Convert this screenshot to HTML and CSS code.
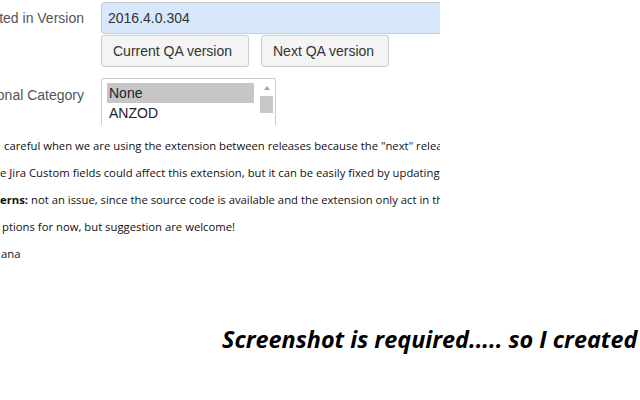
FILE: index.html
```html
<!DOCTYPE html>
<html>
<head>
<meta charset="utf-8">
<link rel="stylesheet" href="styles.css">
</head>
<body>
<div class="page">
  <div class="form">
    <div class="field">
      <div class="label"><span>Affected in Version</span></div>
      <div class="control">
        <div class="input">2016.4.0.304</div>
        <div class="buttons">
          <div class="btn">Current QA version</div>
          <div class="btn">Next QA version</div>
        </div>
      </div>
    </div>
    <div class="field field-cat">
      <div class="label label-cat"><span>Additional Category</span></div>
      <div class="control">
        <div class="listbox">
          <div class="options">
            <div class="opt selected">None</div>
            <div class="opt">ANZOD</div>
          </div>
          <div class="scrollbar">
            <div class="arrow"></div>
            <div class="thumb"></div>
          </div>
        </div>
      </div>
    </div>
  </div>
  <div class="notes">
    <p class="note n1">careful when we are using the extension between releases because the "next" release will not be the same</p>
    <p class="note">e Jira Custom fields could affect this extension, but it can be easily fixed by updating the code</p>
    <p class="note"><b>erns:</b> not an issue, since the source code is available and the extension only act in the page</p>
    <p class="note n4">ptions for now, but suggestion are welcome!</p>
    <p class="note n5">ana</p>
  </div>
</div>
<div class="caption">Screenshot is required..... so I created</div>
</body>
</html>
```
FILE: styles.css
```css
html, body {
  margin: 0;
  padding: 0;
  background: #fff;
}
.page {
  width: 440px;
  overflow: hidden;
}
.form {
  padding-top: 2px;
  font-family: "Liberation Sans", Arial, sans-serif;
  font-size: 14px;
  color: #333;
}
.field {
  display: flex;
  gap: 17px;
}
.label {
  width: 84px;
  flex: none;
  display: flex;
  justify-content: flex-end;
  white-space: nowrap;
  color: #555;
  height: 32px;
  align-items: center;
}
.label-cat {
  height: auto;
  align-items: flex-start;
  padding-top: 9px;
}
.control {
  flex: 1;
  min-width: 0;
}
.input {
  box-sizing: border-box;
  height: 32px;
  width: 360px;
  background: #d8e8fc;
  border: 1px solid #ccc;
  border-radius: 3px;
  padding: 0 6px;
  line-height: 30px;
  color: #333;
}
.buttons {
  display: flex;
  gap: 12px;
  margin-top: 1px;
}
.btn {
  box-sizing: border-box;
  height: 32px;
  line-height: 30px;
  padding: 0 11px;
  background: #f4f4f4;
  border: 1px solid #ccc;
  border-radius: 3px;
  color: #333;
}
.btn:first-child { width: 148px; }
.btn:last-child { width: 128px; }
.field-cat {
  margin-top: 11px;
}
.listbox {
  box-sizing: border-box;
  width: 175px;
  height: 47px;
  border: 1px solid #ccc;
  border-bottom: none;
  border-radius: 3px 3px 0 0;
  display: flex;
  padding: 4px 1px 0 5px;
  gap: 6px;
  overflow: hidden;
}
.options {
  width: 147px;
}
.opt {
  height: 20px;
  line-height: 20px;
  padding-left: 2px;
  color: #222;
}
.selected {
  background: #c6c6c6;
}
.scrollbar {
  width: 13px;
  display: flex;
  flex-direction: column;
  align-items: center;
}
.arrow {
  margin-top: 3px;
  width: 0;
  height: 0;
  border-left: 3px solid transparent;
  border-right: 3px solid transparent;
  border-bottom: 4px solid #a3a3a3;
}
.thumb {
  margin-top: 6px;
  width: 13px;
  height: 17px;
  background: #c8c8c8;
}
.notes {
  margin-top: 7px;
  font-family: "Open Sans", "DejaVu Sans", sans-serif;
  font-size: 11.3px;
  color: #111;
}
.note {
  margin: 0;
  line-height: 27px;
  height: 27px;
  white-space: nowrap;
}
.n1 { padding-left: 4px; }
.n4 { padding-left: 2px; }
.n5 { padding-left: 1px; }
.note b { font-weight: 700; }
.caption {
  margin-top: 57px;
  padding-left: 222px;
  font-family: "Open Sans", sans-serif;
  font-weight: 700;
  font-style: italic;
  font-size: 23.4px;
  color: #000;
  white-space: nowrap;
  line-height: 30px;
}
```
